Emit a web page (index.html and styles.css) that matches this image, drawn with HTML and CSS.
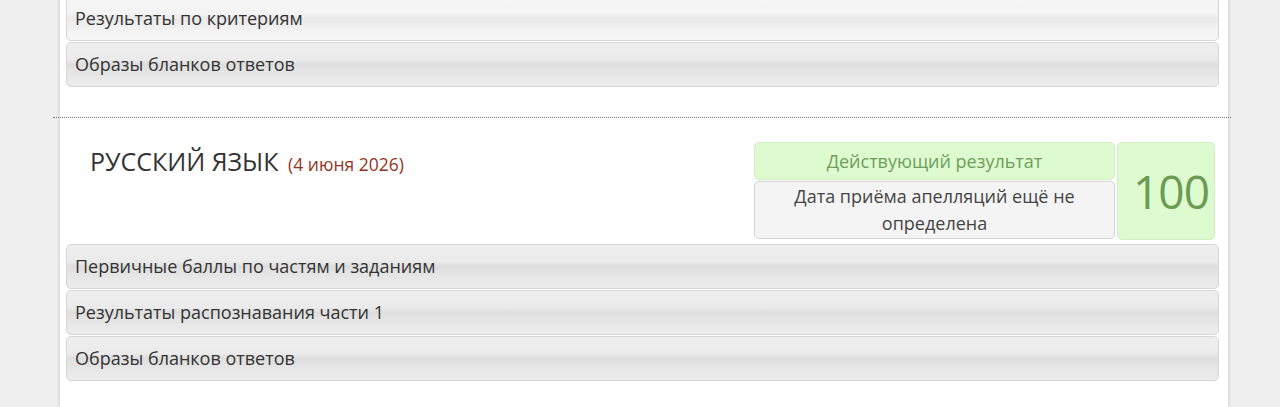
FILE: index.html
```html
<!DOCTYPE html>
<html lang="ru">
<head>
    <meta charset="UTF-8">
    <meta name="viewport" content="width=device-width, initial-scale=1.0">
    <title>Результаты экзаменов</title>
    <link rel="stylesheet" href="styles.css">
</head>
<body>
    <div class="page">
        <div class="exam">
            <div class="acc-head acc-hover">Результаты по критериям</div>
            <div class="acc-head">Образы бланков ответов</div>
        </div>

        <div class="divider"></div>

        <div class="exam">
            <div class="exam-top">
                <h2 class="exam-title">РУССКИЙ ЯЗЫК <span class="exam-date">(4 июня 2026)</span></h2>
                <div class="exam-status">
                    <div class="status-col">
                        <div class="status-ok">Действующий результат</div>
                        <div class="status-note">Дата приёма апелляций ещё не определена</div>
                    </div>
                    <div class="score">100</div>
                </div>
            </div>
            <div class="acc-head">Первичные баллы по частям и заданиям</div>
            <div class="acc-head">Результаты распознавания части 1</div>
            <div class="acc-head">Образы бланков ответов</div>
        </div>
    </div>
</body>
</html>
```

FILE: styles.css
```css
body {
    margin: 0;
    background-color: #efefef;
    font-family: "Open Sans", "Liberation Sans", sans-serif;
    color: #333;
    overflow: hidden;
}
.page {
    width: 1153px;
    margin: -4px 0 0 60px;
    padding: 0 9px 26px 6px;
    background-color: #fff;
    box-shadow: 0 0 4px rgba(0, 0, 0, 0.18);
}
.exam {
    display: flex;
    flex-direction: column;
    gap: 1px;
}
.acc-head {
    height: 43px;
    line-height: 43px;
    padding: 0 8px;
    font-size: 18px;
    color: #333;
    border: 1px solid #d6d6d6;
    border-radius: 5px;
    background: linear-gradient(to bottom, #eeeeee 0%, #ebebeb 38%, #dedede 50%, #e3e3e3 62%, #e8e8e8 80%, #ececec 100%);
}
.acc-hover {
    background: linear-gradient(to bottom, #f6f6f6 0%, #f4f4f4 38%, #e9e9e9 50%, #eeeeee 62%, #f3f3f3 80%, #f6f6f6 100%);
}
.divider {
    margin: 30px -12px 0 -13px;
    border-top: 1px dotted #777;
}
.exam-top {
    display: flex;
    justify-content: space-between;
    padding: 24px 4px 3px 24px;
}
.exam-title {
    margin: 2px 0 0;
    font-size: 25px;
    font-weight: normal;
    color: #333;
}
.exam-date {
    margin-left: 3px;
    font-size: 17.5px;
    color: #933422;
}
.exam-status {
    display: flex;
    gap: 2px;
}
.status-col {
    width: 361px;
    display: flex;
    flex-direction: column;
    gap: 1px;
}
.status-ok {
    height: 36px;
    line-height: 36px;
    text-align: center;
    font-size: 18px;
    color: #6f9e5c;
    background-color: #ddfbcf;
    border: 1px solid #d3eec5;
    border-radius: 5px;
}
.status-note {
    height: 56px;
    padding: 0 24px;
    display: flex;
    align-items: center;
    justify-content: center;
    text-align: center;
    font-size: 18px;
    line-height: 27px;
    color: #444;
    background-color: #f4f4f4;
    border: 1px solid #d4d4d4;
    border-radius: 5px;
}
.score {
    box-sizing: border-box;
    width: 98px;
    height: 98px;
    display: flex;
    align-items: center;
    justify-content: center;
    padding-left: 10px;
    font-size: 46px;
    letter-spacing: -1px;
    color: #6b9a52;
    background-color: #ddfbcf;
    border: 1px solid #d3eec5;
    border-radius: 5px;
}
```
